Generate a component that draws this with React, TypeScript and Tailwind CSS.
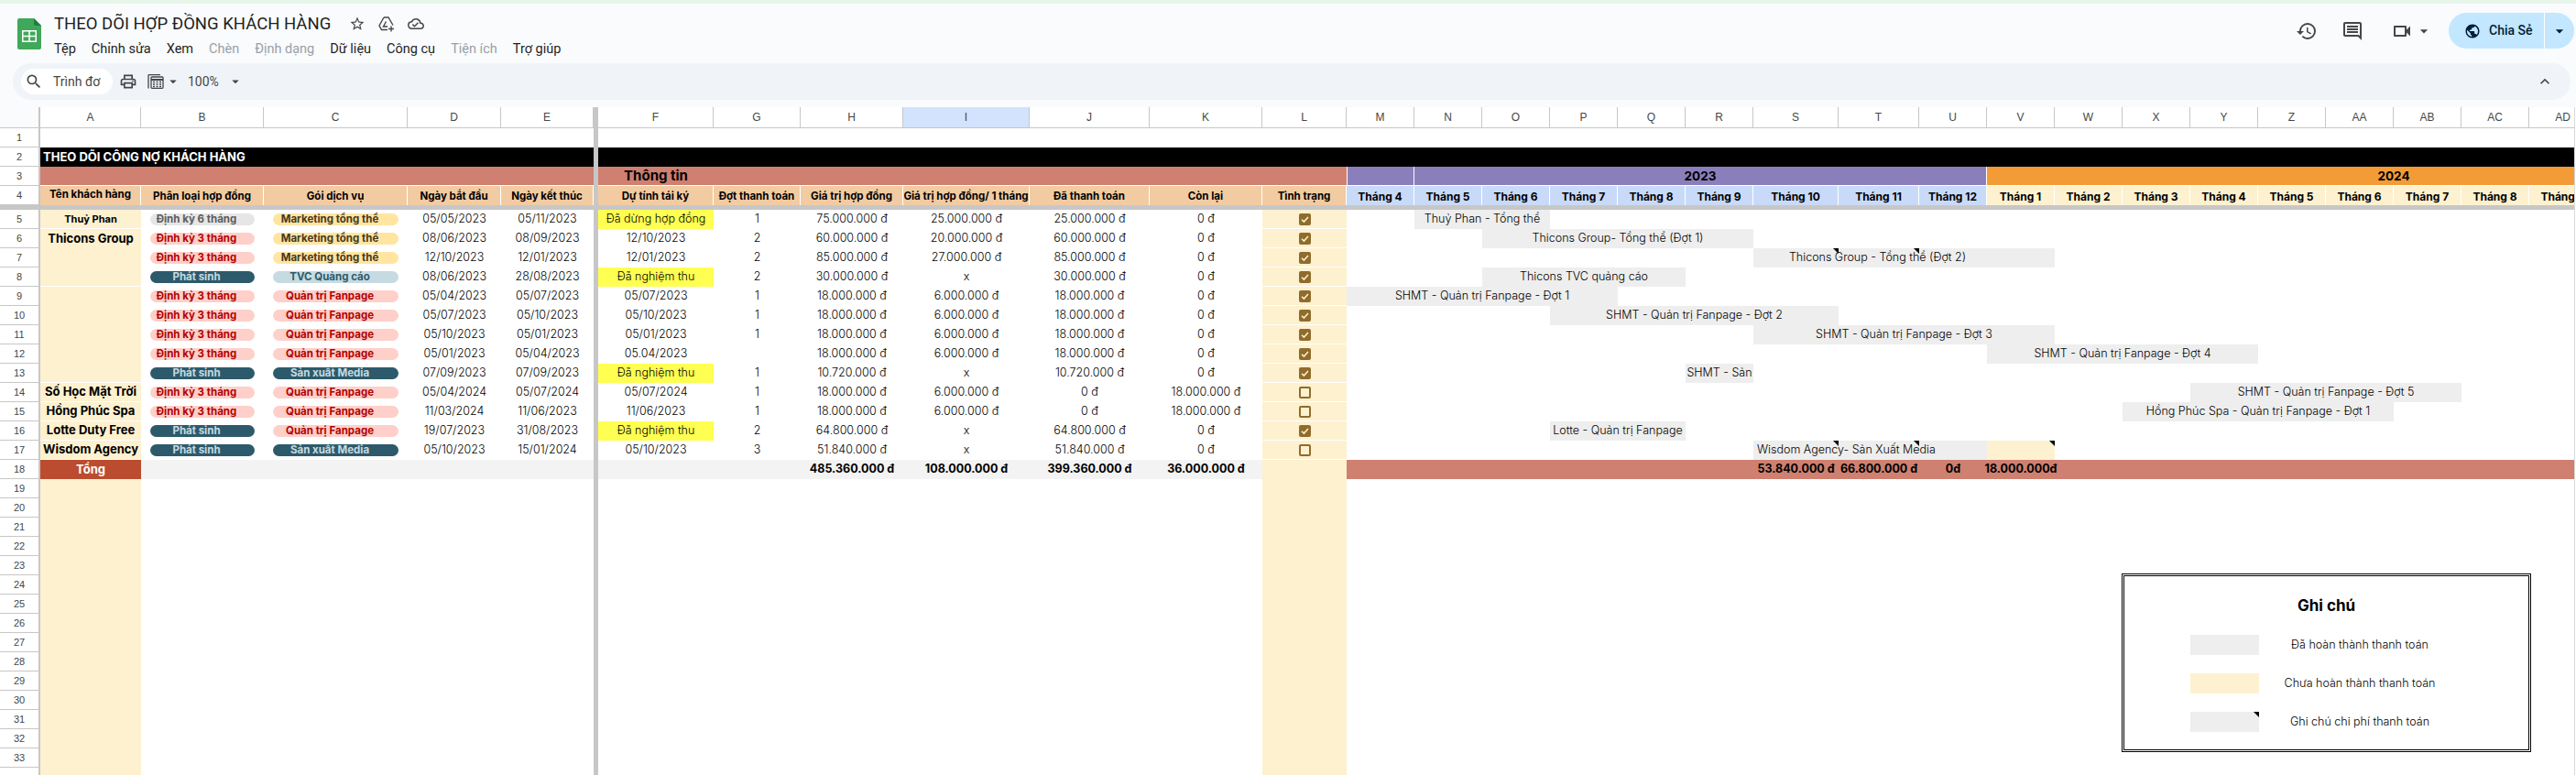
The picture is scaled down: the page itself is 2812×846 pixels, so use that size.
import { Fragment } from 'react';
import {
  MdArrowDropDown,
  MdHistory,
  MdKeyboardArrowUp,
  MdOutlineCloudDone,
  MdOutlineComment,
  MdOutlinePrint,
  MdOutlineVideocam,
  MdPublic,
  MdSearch,
  MdStarBorder,
} from 'react-icons/md';

const COLS = ['#', 'A', 'B', 'C', 'D', 'E', '|', 'F', 'G', 'H', 'I', 'J', 'K', 'L', 'M', 'N', 'O', 'P', 'Q', 'R', 'S', 'T', 'U', 'V', 'W', 'X', 'Y', 'Z', 'AA', 'AB', 'AC', 'AD', 'AE', 'AF', 'AG'];

const col = (c: string) => COLS.indexOf(c) + 1;
const row = (n: number) => (n <= 4 ? n + 1 : n + 2);
const area = (from: string, to: string, r1: number, r2 = r1) => ({
  gridColumn: `${col(from)} / ${col(to) + 1}`,
  gridRow: `${row(r1)} / ${row(r2) + 1}`,
});

type Pill = 'gray' | 'red' | 'dark' | 'yellow' | 'blue' | 'rose';

const PILL_CLASS: Record<Pill, string> = {
  gray: 'bg-[#e6e6e6] text-[#5c5c5c]',
  red: 'bg-[#ffcfc9] text-[#b10202]',
  dark: 'bg-[#2d5a6b] text-[#c6dbe1]',
  yellow: 'bg-[#ffe5a0] text-[#473821]',
  blue: 'bg-[#c6dbe1] text-[#2d5a6b]',
  rose: 'bg-[#ffcfc9] text-[#b10202]',
};

const ROWS = [
  { n: 5, type: ['Định kỳ 6 tháng', 'gray'], pack: ['Marketing tổng thể', 'yellow'], start: '05/05/2023', end: '05/11/2023', renew: 'Đã dừng hợp đồng', batch: '1', value: '75.000.000 đ', month: '25.000.000 đ', paid: '25.000.000 đ', left: '0 đ', done: true },
  { n: 6, type: ['Định kỳ 3 tháng', 'red'], pack: ['Marketing tổng thể', 'yellow'], start: '08/06/2023', end: '08/09/2023', renew: '12/10/2023', batch: '2', value: '60.000.000 đ', month: '20.000.000 đ', paid: '60.000.000 đ', left: '0 đ', done: true },
  { n: 7, type: ['Định kỳ 3 tháng', 'red'], pack: ['Marketing tổng thể', 'yellow'], start: '12/10/2023', end: '12/01/2023', renew: '12/01/2023', batch: '2', value: '85.000.000 đ', month: '27.000.000 đ', paid: '85.000.000 đ', left: '0 đ', done: true },
  { n: 8, type: ['Phát sinh', 'dark'], pack: ['TVC Quảng cáo', 'blue'], start: '08/06/2023', end: '28/08/2023', renew: 'Đã nghiệm thu', batch: '2', value: '30.000.000 đ', month: 'x', paid: '30.000.000 đ', left: '0 đ', done: true },
  { n: 9, type: ['Định kỳ 3 tháng', 'red'], pack: ['Quản trị Fanpage', 'rose'], start: '05/04/2023', end: '05/07/2023', renew: '05/07/2023', batch: '1', value: '18.000.000 đ', month: '6.000.000 đ', paid: '18.000.000 đ', left: '0 đ', done: true },
  { n: 10, type: ['Định kỳ 3 tháng', 'red'], pack: ['Quản trị Fanpage', 'rose'], start: '05/07/2023', end: '05/10/2023', renew: '05/10/2023', batch: '1', value: '18.000.000 đ', month: '6.000.000 đ', paid: '18.000.000 đ', left: '0 đ', done: true },
  { n: 11, type: ['Định kỳ 3 tháng', 'red'], pack: ['Quản trị Fanpage', 'rose'], start: '05/10/2023', end: '05/01/2023', renew: '05/01/2023', batch: '1', value: '18.000.000 đ', month: '6.000.000 đ', paid: '18.000.000 đ', left: '0 đ', done: true },
  { n: 12, type: ['Định kỳ 3 tháng', 'red'], pack: ['Quản trị Fanpage', 'rose'], start: '05/01/2023', end: '05/04/2023', renew: '05.04/2023', batch: '', value: '18.000.000 đ', month: '6.000.000 đ', paid: '18.000.000 đ', left: '0 đ', done: true },
  { n: 13, type: ['Phát sinh', 'dark'], pack: ['Sản xuất Media', 'dark'], start: '07/09/2023', end: '07/09/2023', renew: 'Đã nghiệm thu', batch: '1', value: '10.720.000 đ', month: 'x', paid: '10.720.000 đ', left: '0 đ', done: true },
  { n: 14, type: ['Định kỳ 3 tháng', 'red'], pack: ['Quản trị Fanpage', 'rose'], start: '05/04/2024', end: '05/07/2024', renew: '05/07/2024', batch: '1', value: '18.000.000 đ', month: '6.000.000 đ', paid: '0 đ', left: '18.000.000 đ', done: false },
  { n: 15, type: ['Định kỳ 3 tháng', 'red'], pack: ['Quản trị Fanpage', 'rose'], start: '11/03/2024', end: '11/06/2023', renew: '11/06/2023', batch: '1', value: '18.000.000 đ', month: '6.000.000 đ', paid: '0 đ', left: '18.000.000 đ', done: false },
  { n: 16, type: ['Phát sinh', 'dark'], pack: ['Quản trị Fanpage', 'rose'], start: '19/07/2023', end: '31/08/2023', renew: 'Đã nghiệm thu', batch: '2', value: '64.800.000 đ', month: 'x', paid: '64.800.000 đ', left: '0 đ', done: true },
  { n: 17, type: ['Phát sinh', 'dark'], pack: ['Sản xuất Media', 'dark'], start: '05/10/2023', end: '15/01/2024', renew: '05/10/2023', batch: '3', value: '51.840.000 đ', month: 'x', paid: '51.840.000 đ', left: '0 đ', done: false },
];

const CLIENTS = [
  { r1: 5, r2: 5, name: 'Thuỷ Phan', cls: 'items-center text-[11px]' },
  { r1: 6, r2: 8, name: 'Thicons Group', cls: 'items-start pt-px text-[13px]' },
  { r1: 9, r2: 13, name: '', cls: '' },
  { r1: 14, r2: 14, name: 'Số Học Mặt Trời', cls: 'items-center text-[13px]' },
  { r1: 15, r2: 15, name: 'Hồng Phúc Spa', cls: 'items-center text-[13px]' },
  { r1: 16, r2: 16, name: 'Lotte Duty Free', cls: 'items-center text-[13px]' },
  { r1: 17, r2: 17, name: 'Wisdom Agency', cls: 'items-center text-[13px]' },
];

const HEADERS: [string, string][] = [
  ['A', 'Tên khách hàng'],
  ['B', 'Phân loại hợp đồng'],
  ['C', 'Gói dịch vụ'],
  ['D', 'Ngày bắt đầu'],
  ['E', 'Ngày kết thúc'],
  ['F', 'Dự tính tái ký'],
  ['G', 'Đợt thanh toán'],
  ['H', 'Giá trị hợp đồng'],
  ['I', 'Giá trị hợp đồng/ 1 tháng'],
  ['J', 'Đã thanh toán'],
  ['K', 'Còn lại'],
  ['L', 'Tình trạng'],
];

const MONTHS_2023: [string, string][] = [
  ['M', 'Tháng 4'], ['N', 'Tháng 5'], ['O', 'Tháng 6'], ['P', 'Tháng 7'], ['Q', 'Tháng 8'],
  ['R', 'Tháng 9'], ['S', 'Tháng 10'], ['T', 'Tháng 11'], ['U', 'Tháng 12'],
];

const MONTHS_2024: [string, string][] = [
  ['V', 'Tháng 1'], ['W', 'Tháng 2'], ['X', 'Tháng 3'], ['Y', 'Tháng 4'], ['Z', 'Tháng 5'],
  ['AA', 'Tháng 6'], ['AB', 'Tháng 7'], ['AC', 'Tháng 8'], ['AD', 'Tháng 9'],
];

const BARS = [
  { from: 'N', to: 'O', r: 5, text: 'Thuỷ Phan - Tổng thể', cls: 'justify-center' },
  { from: 'O', to: 'R', r: 6, text: 'Thicons Group- Tổng thể (Đợt 1)', cls: 'justify-center' },
  { from: 'S', to: 'V', r: 7, text: 'Thicons Group - Tổng thể (Đợt 2)', cls: 'justify-center pr-[58px]' },
  { from: 'O', to: 'Q', r: 8, text: 'Thicons TVC quảng cáo', cls: 'justify-center' },
  { from: 'M', to: 'P', r: 9, text: 'SHMT - Quản trị Fanpage - Đợt 1', cls: 'justify-center' },
  { from: 'P', to: 'S', r: 10, text: 'SHMT - Quản trị Fanpage - Đợt 2', cls: 'justify-center' },
  { from: 'S', to: 'V', r: 11, text: 'SHMT - Quản trị Fanpage - Đợt 3', cls: 'justify-center' },
  { from: 'V', to: 'Y', r: 12, text: 'SHMT - Quản trị Fanpage - Đợt 4', cls: 'justify-center' },
  { from: 'R', to: 'R', r: 13, text: 'SHMT - Sản', cls: 'justify-center' },
  { from: 'Y', to: 'AB', r: 14, text: 'SHMT - Quản trị Fanpage - Đợt 5', cls: 'justify-center' },
  { from: 'X', to: 'AA', r: 15, text: 'Hồng Phúc Spa - Quản trị Fanpage - Đợt 1', cls: 'justify-center' },
  { from: 'P', to: 'Q', r: 16, text: 'Lotte - Quản trị Fanpage', cls: 'justify-center' },
  { from: 'S', to: 'U', r: 17, text: 'Wisdom Agency- Sản Xuất Media', cls: 'justify-start pl-1' },
];

const NOTES: [string, number][] = [['S', 7], ['T', 7], ['S', 17], ['T', 17], ['V', 17]];

const TOTALS: [string, string][] = [
  ['H', '485.360.000 đ'],
  ['I', '108.000.000 đ'],
  ['J', '399.360.000 đ'],
  ['K', '36.000.000 đ'],
];

const GANTT_TOTALS: [string, string][] = [
  ['S', '53.840.000 đ'],
  ['T', '66.800.000 đ'],
  ['U', '0đ'],
  ['V', '18.000.000đ'],
];

const MENU = [
  { label: 'Tệp' },
  { label: 'Chỉnh sửa' },
  { label: 'Xem' },
  { label: 'Chèn', off: true },
  { label: 'Định dạng', off: true },
  { label: 'Dữ liệu' },
  { label: 'Công cụ' },
  { label: 'Tiện ích', off: true },
  { label: 'Trợ giúp' },
];

const ROW_NUMBERS = Array.from({ length: 34 }, (_, i) => i + 1);

function NoteMark() {
  return <span className="absolute top-0 right-0 w-0 h-0 border-t-[6px] border-l-[6px] border-t-black border-l-transparent" />;
}

function Chip({ label, tone }: { label: string; tone: Pill }) {
  return (
    <div className="flex items-center justify-center px-[10px]">
      <span className={`flex items-center justify-center w-full h-[13px] rounded-full pr-[13px] text-[11.5px] leading-none font-bold whitespace-nowrap ${PILL_CLASS[tone]}`}>
        {label}
      </span>
    </div>
  );
}

function Check({ on }: { on: boolean }) {
  if (!on) return <span className="block w-[13px] h-[13px] rounded-[2px] border-2 border-[#8f6c2c]" />;
  return (
    <svg width="13" height="13" viewBox="0 0 13 13" className="block">
      <rect width="13" height="13" rx="2" fill="#8f6c2c" />
      <path d="M3 6.7l2.4 2.4L10 3.9" fill="none" stroke="#fdf1cf" strokeWidth="1.5" />
    </svg>
  );
}

function SheetsLogo() {
  return (
    <svg width="26" height="34" viewBox="0 0 26 34" className="shrink-0">
      <path d="M2 0h16l8 8v24a2 2 0 0 1-2 2H2a2 2 0 0 1-2-2V2a2 2 0 0 1 2-2z" fill="#3fa85a" />
      <path d="M18 0l8 8h-6a2 2 0 0 1-2-2z" fill="#1e7e42" />
      <path d="M5 13h16v13H5zM6.500 14.500v4.300h5.700v-4.300zM13.800 14.500v4.300h5.700v-4.300zM6.500 20.300v4.200h5.700v-4.200zM13.800 20.300v4.200h5.700v-4.200z" fill="#fff" fillRule="evenodd" />
    </svg>
  );
}

function SheetCalcIcon() {
  return (
    <svg width="18" height="16" viewBox="0 0 18 16" className="ml-[11px] shrink-0" fill="none" stroke="#444746">
      <path d="M1 15.500V1.500a1 1 0 0 1 1-1h12" strokeWidth="1.300" />
      <rect x="4" y="3" width="13" height="12.300" rx="1" strokeWidth="1.300" />
      <path d="M4 6h13" strokeWidth="2" />
      <path d="M6 8.500h2M9.500 8.500h2M13 8.500h2M6 11h2M9.500 11h2M13 11h2M6 13.500h2M9.500 13.500h2M13 13.500h2" strokeWidth="1.500" />
    </svg>
  );
}

function DriveAddIcon() {
  return (
    <svg width="18" height="17" viewBox="0 0 18 17" fill="none" stroke="#444746" strokeWidth="1.400">
      <path d="M6 1h5l5 8.500M6 1L1 10l2.500 4.500H10" />
      <path d="M8.500 5.500L5.500 11H10" />
      <path d="M14 10.500v6M11 13.500h6" />
    </svg>
  );
}

function TopBar() {
  return (
    <div className="h-[117px] shrink-0 bg-[#f9fbfd] border-t-4 border-[#e8f5e9] font-['Roboto',sans-serif]">
      <div className="flex h-[65px]">
        <div className="pl-[19px] pt-4">
          <SheetsLogo />
        </div>
        <div className="pl-[14px] pt-[10px]">
          <div className="flex items-center h-6">
            <span className="text-[18.500px] leading-6 text-[#1f1f1f] whitespace-nowrap">THEO DÕI HỢP ĐỒNG KHÁCH HÀNG</span>
            <div className="flex items-center gap-[14px] ml-5 text-[#444746]">
              <MdStarBorder size={18} />
              <DriveAddIcon />
              <MdOutlineCloudDone size={18} />
            </div>
          </div>
          <div className="flex gap-[17px] mt-[6px] text-[14.500px] leading-5 whitespace-nowrap">
            {MENU.map((m) => (
              <span key={m.label} className={m.off ? 'text-[#9aa0a6]' : 'text-[#1f1f1f]'}>
                {m.label}
              </span>
            ))}
          </div>
        </div>
        <div className="flex items-center ml-auto h-[59px] pr-[2px] text-[#444746]">
          <MdHistory size={24} />
          <MdOutlineComment size={24} className="ml-[26px]" />
          <MdOutlineVideocam size={24} className="ml-[30px]" />
          <MdArrowDropDown size={20} className="ml-[2px]" />
          <div className="flex items-center h-[39px] w-[137px] ml-[17px] rounded-full bg-[#c2e7ff] text-[#001d35]">
            <MdPublic size={18} className="ml-[17px]" />
            <span className="ml-[9px] w-[51px] text-[14px] font-medium whitespace-nowrap">Chia Sẻ</span>
            <span className="ml-[9px] w-px h-full bg-white" />
            <MdArrowDropDown size={20} className="ml-[6px]" />
          </div>
        </div>
      </div>
      <div className="flex items-center h-10 ml-[14px] mr-[6px] rounded-full bg-[#f0f4f9] text-[#444746]">
        <div className="flex items-center w-[100px] h-7 ml-[9px] rounded-full bg-white overflow-hidden">
          <MdSearch size={20} className="ml-[4px] shrink-0" />
          <span className="ml-[11px] text-[14px] whitespace-nowrap">Trình đơ</span>
        </div>
        <MdOutlinePrint size={20} className="ml-[7px]" />
        <SheetCalcIcon />
        <MdArrowDropDown size={18} className="ml-[1px]" />
        <span className="ml-[7px] text-[14px]">100%</span>
        <MdArrowDropDown size={18} className="ml-[9px]" />
        <MdKeyboardArrowUp size={20} className="ml-auto mr-[18px]" />
      </div>
    </div>
  );
}

function Sheet() {
  return (
    <div className="relative flex-1 overflow-hidden mr-px border-r border-[#d9d9d9] font-['Inter',sans-serif] text-black">
      <div className="grid w-max grid-cols-[44px_110px_134px_157px_102px_101px_5px_126px_95px_112px_138px_131px_123px_92px_repeat(6,74px)_93px_88px_repeat(13,74px)] grid-rows-[23px_repeat(4,21px)_5px_repeat(30,21px)]">
        {/* column letters */}
        <div className="bg-[#f9fbfd] border-r-2 border-b border-[#c7c7c7]" style={{ gridColumn: 1, gridRow: 1 }} />
        {COLS.slice(1, col('AD')).map((c) =>
          c === '|' ? null : (
            <div
              key={c}
              className={`flex items-center justify-center border-r border-b border-[#c7c7c7] text-[12px] font-['Liberation_Sans',sans-serif] text-[#444746] ${c === 'I' ? 'bg-[#d3e3fd]' : 'bg-white'}`}
              style={{ gridColumn: col(c), gridRow: 1 }}
            >
              {c}
            </div>
          ),
        )}

        {/* row numbers, the last row only peeks in at the bottom edge */}
        {ROW_NUMBERS.map((n) => (
          <div
            key={n}
            className="flex items-center justify-center bg-white border-r-2 border-b border-[#c7c7c7] text-[11px] font-['Liberation_Sans',sans-serif] text-[#444746]"
            style={{ gridColumn: 1, gridRow: row(n) }}
          >
            {n < 34 ? n : ''}
          </div>
        ))}

        {/* title and group bands */}
        <div className="flex items-center pl-[3px] bg-black text-white text-[13px] font-bold whitespace-nowrap" style={area('A', 'AG', 2)}>
          THEO DÕI CÔNG NỢ KHÁCH HÀNG
        </div>
        <div className="bg-[#cf8070] border-b border-white" style={area('A', 'E', 3)} />
        <div className="bg-[#cf8070] border-b border-white" style={area('F', 'L', 3)}>
          <div className="flex items-center justify-center w-[126px] h-full text-[15px] font-bold">Thông tin</div>
        </div>
        <div className="bg-[#8b7fbb] border-b border-r border-white border-l" style={area('M', 'M', 3)} />
        <div className="flex items-center justify-center bg-[#8b7fbb] border-b border-r border-white text-[13.500px] font-bold" style={area('N', 'U', 3)}>
          2023
        </div>
        <div className="flex items-center justify-center bg-[#f39c37] border-b border-white text-[13.500px] font-bold" style={area('V', 'AG', 3)}>
          2024
        </div>

        {/* header row */}
        {HEADERS.map(([c, label]) => (
          <div
            key={c}
            className={`flex items-center justify-center bg-[#f2cba2] border-r border-white text-[11.500px] font-bold whitespace-nowrap ${c === 'A' ? 'pb-px' : 'pt-[2px]'}`}
            style={area(c, c, 4)}
          >
            {label}
          </div>
        ))}
        {MONTHS_2023.map(([c, label]) => (
          <div key={c} className="flex items-center justify-center pt-[2px] bg-[#c9daf8] border-r border-white text-[12px] font-bold" style={area(c, c, 4)}>
            {label}
          </div>
        ))}
        {MONTHS_2024.map(([c, label]) => (
          <div key={c} className="flex items-center justify-center pt-[2px] bg-[#fdf1cf] border-r border-white text-[12px] font-bold whitespace-nowrap" style={area(c, c, 4)}>
            {label}
          </div>
        ))}

        {/* horizontal freeze line */}
        <div className="bg-[#c7c7c7]" style={{ gridColumn: '1 / -1', gridRow: 6 }} />

        {/* clients */}
        {CLIENTS.map((c) => (
          <div
            key={c.r1}
            className={`flex justify-center bg-[#fdf1cf] border-b border-white font-bold whitespace-nowrap ${c.cls}`}
            style={area('A', 'A', c.r1, c.r2)}
          >
            {c.name}
          </div>
        ))}
        <div className="flex items-center justify-center bg-[#bc4c2f] text-white text-[13px] font-bold" style={area('A', 'A', 18)}>
          Tổng
        </div>
        <div className="bg-[#fdf1cf]" style={area('A', 'A', 19, 34)} />
        <div className="bg-[#fdf1cf]" style={area('L', 'L', 18, 34)} />

        {/* contract rows */}
        {ROWS.map((r) => (
          <Fragment key={r.n}>
            <div style={area('B', 'B', r.n)} className="grid">
              <Chip label={r.type[0]} tone={r.type[1] as Pill} />
            </div>
            <div style={area('C', 'C', r.n)} className="grid">
              <Chip label={r.pack[0]} tone={r.pack[1] as Pill} />
            </div>
            {[
              ['D', r.start],
              ['E', r.end],
              ['F', r.renew],
              ['G', r.batch],
              ['H', r.value],
              ['I', r.month],
              ['J', r.paid],
              ['K', r.left],
            ].map(([c, v]) => (
              <div
                key={c}
                className={`flex items-center justify-center text-[12.500px] font-light whitespace-nowrap ${c === 'F' && v.startsWith('Đã') ? 'bg-[#ffff52]' : ''}`}
                style={area(c, c, r.n)}
              >
                {v}
              </div>
            ))}
            <div className="flex items-center justify-center bg-[#fdf1cf] border-b border-white" style={area('L', 'L', r.n)}>
              <Check on={r.done} />
            </div>
          </Fragment>
        ))}

        {/* totals */}
        <div className="bg-[#f3f3f3]" style={area('B', 'K', 18)} />
        {TOTALS.map(([c, v]) => (
          <div key={c} className="flex items-center justify-center text-[12.500px] font-bold whitespace-nowrap" style={area(c, c, 18)}>
            {v}
          </div>
        ))}
        <div className="bg-[#cf8070]" style={area('M', 'AG', 18)} />
        {GANTT_TOTALS.map(([c, v]) => (
          <div key={c} className="flex items-center justify-center text-[12.500px] font-bold whitespace-nowrap" style={area(c, c, 18)}>
            {v}
          </div>
        ))}

        {/* timeline bars */}
        <div className="bg-[#fdf1cf]" style={area('V', 'V', 17)} />
        {BARS.map((b) => (
          <div key={b.text} className={`flex items-center bg-[#eeeeee] text-[12.500px] font-light whitespace-nowrap ${b.cls}`} style={area(b.from, b.to, b.r)}>
            {b.text}
          </div>
        ))}
        {NOTES.map(([c, r]) => (
          <div key={`${c}${r}`} className="relative" style={area(c, c, r)}>
            <NoteMark />
          </div>
        ))}

        {/* vertical freeze line */}
        <div className="bg-[#c7c7c7]" style={{ gridColumn: col('|'), gridRow: '1 / -1' }} />
      </div>

      {/* floating legend drawing */}
      <div className="absolute left-[2316px] top-[509px] w-[447px] h-[195px] flex flex-col items-center bg-white border-[3px] border-double border-black">
        <div className="mt-[22px] text-[17px] leading-5 font-bold">Ghi chú</div>
        <div className="flex flex-col gap-5 mt-[22px] w-full pl-[72px]">
          {[
            { label: 'Đã hoàn thành thanh toán', cls: 'bg-[#eeeeee]' },
            { label: 'Chưa hoàn thành thanh toán', cls: 'bg-[#fdf1cf]' },
            { label: 'Ghi chú chi phí thanh toán', cls: 'bg-[#eeeeee]', mark: true },
          ].map((l) => (
            <div key={l.label} className="flex items-center">
              <div className={`relative w-[75px] h-[22px] ${l.cls}`}>{l.mark && <NoteMark />}</div>
              <div className="w-[220px] text-center text-[12.500px] font-light whitespace-nowrap">{l.label}</div>
            </div>
          ))}
        </div>
      </div>
    </div>
  );
}

export default function App() {
  return (
    <div className="flex flex-col w-[2812px] h-[846px] overflow-hidden bg-white">
      <TopBar />
      <Sheet />
    </div>
  );
}
